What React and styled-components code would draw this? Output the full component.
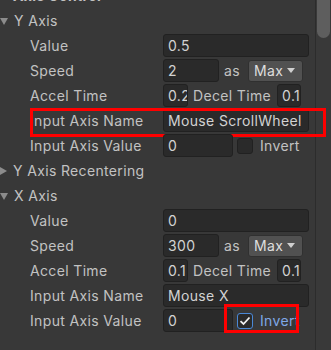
import React from 'react';
import styled, { createGlobalStyle } from 'styled-components';

const GlobalStyle = createGlobalStyle`
  body {
    margin: 0;
    background: #383838;
    font-family: 'Inter', 'Noto Sans', sans-serif;
    font-size: 14px;
    letter-spacing: 0.35px;
    color: #c2c2c2;
    overflow: hidden;
  }
`;

const Frame = styled.div`
  display: flex;
  width: 331px;
  height: 350px;
  overflow: hidden;
`;

const Panel = styled.div`
  width: 316px;
  margin-top: -17px; /* list is scrolled a bit */
  display: flex;
  flex-direction: column;
`;

const Scrollbar = styled.div`
  width: 14px;
  border-left: 1px solid #2c2c2c;
  background: #393939;
  padding-left: 1px;
`;

const Thumb = styled.div`
  width: 13px;
  height: 38px;
  background: #5e5e5e;
  border-radius: 0 0 7px 7px;
`;

const Foldout = styled.div`
  display: flex;
  align-items: center;
  height: 25px;
  gap: 6px;
  font-weight: ${({ bold }) => (bold ? 700 : 400)};
  padding-left: ${({ bold }) => (bold ? '13px' : '0')};
`;

const Arrow = styled.span`
  width: 0;
  height: 0;
  ${({ open }) =>
    open
      ? `border-left: 4px solid transparent;
         border-right: 4px solid transparent;
         border-top: 7px solid #8c8c8c;
         margin-top: 1px;`
      : `border-top: 4px solid transparent;
         border-bottom: 4px solid transparent;
         border-left: 7px solid #8c8c8c;`}
`;

const Row = styled.div`
  position: relative;
  display: flex;
  align-items: center;
  height: 25px;
`;

const Label = styled.div`
  width: 163px;
  box-sizing: border-box;
  padding-left: 30px;
  white-space: nowrap;
`;

const Fields = styled.div`
  display: flex;
  align-items: center;
  width: 146px;
`;

const Field = styled.div`
  box-sizing: border-box;
  height: 23px;
  width: ${({ w }) => (w ? `${w}px` : '100%')};
  flex: ${({ w }) => (w ? 'none' : '1')};
  background: #2a2a2a;
  border: 1px solid #212121;
  border-radius: 3px;
  padding-left: 4px;
  color: #d2d2d2;
  line-height: 21px;
  white-space: nowrap;
  overflow: hidden;
`;

const Inline = styled.span`
  margin: 0 ${({ mr }) => mr}px 0 ${({ ml }) => ml}px;
  white-space: nowrap;
  color: ${({ active }) => (active ? '#7fa8e6' : '#c2c2c2')};
`;

const Dropdown = styled.div`
  box-sizing: border-box;
  width: 55px;
  height: 22px;
  display: flex;
  align-items: center;
  justify-content: space-between;
  padding: 0 7px 0 5px;
  background: #515151;
  border: 1px solid #303030;
  border-radius: 3px;
  color: #dedede;
`;

const Caret = styled.span`
  width: 0;
  height: 0;
  border-left: 4px solid transparent;
  border-right: 4px solid transparent;
  border-top: 5px solid #d0d0d0;
`;

const Checkbox = styled.div`
  box-sizing: border-box;
  width: 16px;
  height: 16px;
  margin-left: 4px;
  border-radius: 3px;
  background: #2a2a2a;
  border: 1px solid ${({ checked }) => (checked ? '#4a88d6' : '#212121')};
  display: flex;
  align-items: center;
  justify-content: center;
`;

const Highlight = styled.div`
  position: absolute;
  box-sizing: border-box;
  border: 3px solid #ff0000;
  pointer-events: none;
`;

function Header({ open, children }) {
  return (
    <Foldout>
      <Arrow open={open} />
      {children}
    </Foldout>
  );
}

function AxisBlock({ value, speed, accel, decel, axisName, checked, highlight }) {
  return (
    <>
      <Row>
        <Label>Value</Label>
        <Fields>
          <Field>{value}</Field>
        </Fields>
      </Row>
      <Row>
        <Label>Speed</Label>
        <Fields>
          <Field w={56}>{speed}</Field>
          <Inline ml={5} mr={8}>as</Inline>
          <Dropdown>
            Max
            <Caret />
          </Dropdown>
        </Fields>
      </Row>
      <Row>
        <Label>Accel Time</Label>
        <Fields>
          <Field w={25}>{accel}</Field>
          <Inline ml={5} mr={6}>Decel Time</Inline>
          <Field w={24}>{decel}</Field>
        </Fields>
      </Row>
      <Row>
        <Label>Input Axis Name</Label>
        <Fields>
          <Field>{axisName}</Field>
        </Fields>
        {highlight === 'name' && (
          <Highlight style={{ left: 30, top: 0, width: 296, height: 29 }} />
        )}
      </Row>
      <Row>
        <Label>Input Axis Value</Label>
        <Fields>
          <Field w={70}>0</Field>
          <Checkbox checked={checked}>
            {checked && (
              <svg width="12" height="10" viewBox="0 0 12 10">
                <path d="M1.5 5.2 L4.5 8 L10.5 1.5" fill="none" stroke="#f0f0f0" strokeWidth="1.8" />
              </svg>
            )}
          </Checkbox>
          <Inline ml={7} mr={0} active={checked}>Invert</Inline>
        </Fields>
        {highlight === 'invert' && (
          <Highlight style={{ left: 224, top: -4, width: 75, height: 29 }} />
        )}
      </Row>
    </>
  );
}

export default function App() {
  return (
    <>
      <GlobalStyle />
      <Frame>
        <Panel>
          <Foldout bold>Axis Control</Foldout>
          <Header open>Y Axis</Header>
          <AxisBlock value="0.5" speed="2" accel="0.2" decel="0.1" axisName="Mouse ScrollWheel" highlight="name" />
          <Header>Y Axis Recentering</Header>
          <Header open>X Axis</Header>
          <AxisBlock value="0" speed="300" accel="0.1" decel="0.1" axisName="Mouse X" checked highlight="invert" />
        </Panel>
        <Scrollbar>
          <Thumb />
        </Scrollbar>
      </Frame>
    </>
  );
}
